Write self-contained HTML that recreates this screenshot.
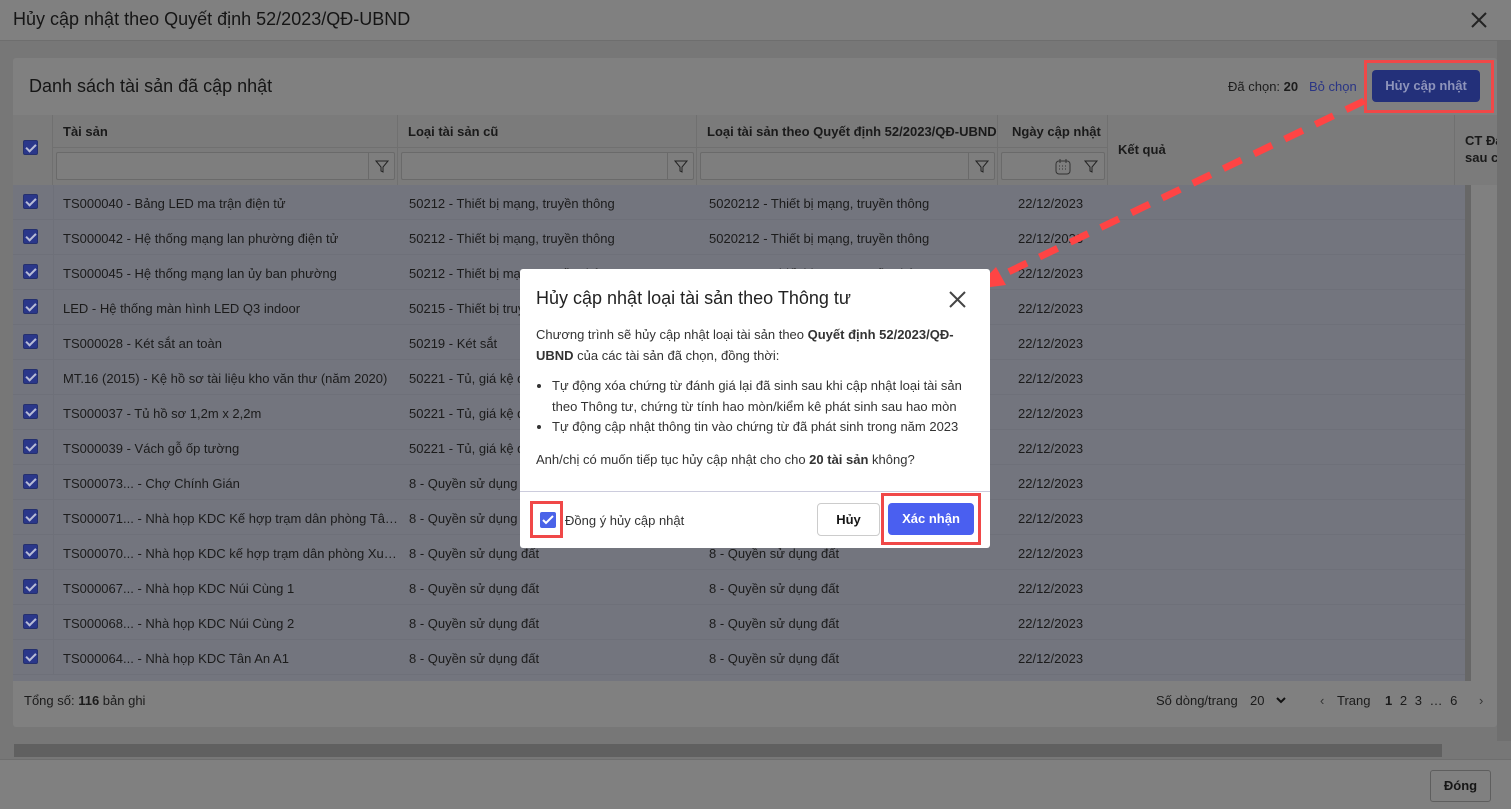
<!DOCTYPE html>
<html><head><meta charset="utf-8"><style>
*{box-sizing:border-box;margin:0;padding:0}
body{width:1511px;height:809px;overflow:hidden;background:#777;font-family:"Liberation Sans",Arial,sans-serif;color:#161616;position:relative;font-size:13px}
.a{position:absolute}
.top{left:0;top:0;width:1511px;height:41px;background:#808080;border-bottom:1px solid #6e6e6e}
.top .t{left:13px;top:9px;font-size:18px;color:#151515}
.card{left:13px;top:58px;width:1484px;height:669px;background:#808080;border-radius:3px}
.cb{width:15px;height:15px;background:#2a378a;border-radius:2px;border:1px solid #25306e}
.cb:after{content:"";position:absolute;left:4px;top:1px;width:4px;height:8px;border:solid #b8bcd6;border-width:0 2px 2px 0;transform:rotate(45deg)}
.hdr{top:115px;left:13px;width:1484px;height:70px;background:#7b7b7b;overflow:hidden}
.col{position:absolute;border-right:1px solid #707070;height:70px;top:0;overflow:hidden}
.ht{position:absolute;left:10px;top:9px;font-weight:bold;font-size:13px;color:#1a1a1a;white-space:nowrap}
.flt{position:absolute;left:3px;top:37px;height:28px;border:1px solid #6a6a6a;background:#7e7e7e;border-radius:2px}
.fi{position:absolute;right:0;top:0;width:26px;height:26px;border-left:1px solid #6a6a6a}
.row{position:absolute;left:13px;width:1452px;height:35px;background:#73757e;border-bottom:1px solid #6e7079}
.row span{position:absolute;top:11px;white-space:nowrap;overflow:hidden;text-overflow:ellipsis;font-size:13px;color:#1b1b1b}
.modal{left:520px;top:269px;width:470px;height:279px;background:#fff;border-radius:3px}
.red{position:absolute;border:3px solid #f04848}
</style></head><body>
<div class="a top"><div class="a t">Hủy cập nhật theo Quyết định 52/2023/QĐ-UBND</div>
<svg class="a" style="left:1470px;top:11px" width="18" height="18"><path d="M2 2L16 16M16 2L2 16" stroke="#222" stroke-width="2"/></svg></div>
<div class="a card"></div>
<div class="a" style="left:29px;top:76px;font-size:18px;color:#151515">Danh sách tài sản đã cập nhật</div>
<div class="a" style="left:1228px;top:79px;color:#1d1d1d">Đã chọn: <b>20</b></div>
<div class="a" style="left:1309px;top:79px;color:#2a3585">Bỏ chọn</div>
<div class="a" style="left:1372px;top:70px;width:108px;height:32px;background:#23307a;border-radius:4px;color:#8e94bb;font-weight:bold;text-align:center;line-height:32px;font-size:13px">Hủy cập nhật</div>
<div class="red" style="left:1364px;top:60px;width:130px;height:53px"></div>
<div class="a hdr">
<div class="col" style="left:0;width:40px"><div class="a cb" style="left:10px;top:25px"></div></div>
<div class="col" style="left:40px;width:345px;"><div class="ht">Tài sản</div><div class="flt" style="width:339px"><div class="fi"><svg width="26" height="26"><path d="M7 8h12l-5 6v5l-2-1v-4z" fill="none" stroke="#222" stroke-width="1"/></svg></div></div><div class="a" style="left:0;top:32px;width:345px;border-top:1px solid #707070"></div></div>
<div class="col" style="left:385px;width:299px"><div class="ht">Loại tài sản cũ</div><div class="flt" style="width:293px"><div class="fi"><svg width="26" height="26"><path d="M7 8h12l-5 6v5l-2-1v-4z" fill="none" stroke="#222"/></svg></div></div><div class="a" style="left:0;top:32px;width:299px;border-top:1px solid #707070"></div></div>
<div class="col" style="left:684px;width:301px"><div class="ht">Loại tài sản theo Quyết định 52/2023/QĐ-UBND</div><div class="flt" style="width:295px"><div class="fi"><svg width="26" height="26"><path d="M7 8h12l-5 6v5l-2-1v-4z" fill="none" stroke="#222"/></svg></div></div><div class="a" style="left:0;top:32px;width:301px;border-top:1px solid #707070"></div></div>
<div class="col" style="left:985px;width:110px"><div class="ht" style="left:14px">Ngày cập nhật</div><div class="flt" style="width:104px"><svg class="a" style="left:52px;top:5px" width="18" height="18"><rect x="2" y="3" width="14" height="13" rx="3" fill="none" stroke="#333"/><path d="M6 1v4M12 1v4" stroke="#333"/><path d="M5 8h1M8 8h1M11 8h1M5 11h1M8 11h1M11 11h1" stroke="#333"/></svg><svg class="a" style="left:76px;top:0" width="26" height="26"><path d="M7 8h12l-5 6v5l-2-1v-4z" fill="none" stroke="#222"/></svg></div><div class="a" style="left:0;top:32px;width:110px;border-top:1px solid #707070"></div></div>
<div class="col" style="left:1095px;width:347px"><div class="ht" style="top:27px">Kết quả</div></div>
<div class="col" style="left:1442px;width:42px;border:none"><div class="ht" style="top:17px;line-height:17px">CT Đánh<br>sau cập</div></div>
</div>
<div class="a" style="left:1465px;top:185px;width:6px;height:496px;background:#676767"></div>
<div class="a" style="left:1497px;top:41px;width:14px;height:719px;background:#6f6f6f"></div>
<div id="rows"></div>
<script>
var R=[["TS000040 - Bảng LED ma trận điện tử","50212 - Thiết bị mạng, truyền thông","5020212 - Thiết bị mạng, truyền thông"],
["TS000042 - Hệ thống mạng lan phường điện tử","50212 - Thiết bị mạng, truyền thông","5020212 - Thiết bị mạng, truyền thông"],
["TS000045 - Hệ thống mạng lan ủy ban phường","50212 - Thiết bị mạng, truyền thông","5020212 - Thiết bị mạng, truyền thông"],
["LED - Hệ thống màn hình LED Q3 indoor","50215 - Thiết bị truyền hình","5020215 - Thiết bị truyền hình"],
["TS000028 - Két sắt an toàn","50219 - Két sắt","5020219 - Két sắt"],
["MT.16 (2015) - Kệ hồ sơ tài liệu kho văn thư (năm 2020)","50221 - Tủ, giá kệ đựng tài liệu","5020221 - Tủ, giá kệ"],
["TS000037 - Tủ hồ sơ 1,2m x 2,2m","50221 - Tủ, giá kệ đựng tài liệu","5020221 - Tủ, giá kệ"],
["TS000039 - Vách gỗ ốp tường","50221 - Tủ, giá kệ đựng tài liệu","5020221 - Tủ, giá kệ"],
["TS000073... - Chợ Chính Gián","8 - Quyền sử dụng đất","8 - Quyền sử dụng đất"],
["TS000071... - Nhà họp KDC Kế hợp trạm dân phòng Tân ...","8 - Quyền sử dụng đất","8 - Quyền sử dụng đất"],
["TS000070... - Nhà họp KDC kế hợp trạm dân phòng Xuân...","8 - Quyền sử dụng đất","8 - Quyền sử dụng đất"],
["TS000067... - Nhà họp KDC Núi Cùng 1","8 - Quyền sử dụng đất","8 - Quyền sử dụng đất"],
["TS000068... - Nhà họp KDC Núi Cùng 2","8 - Quyền sử dụng đất","8 - Quyền sử dụng đất"],
["TS000064... - Nhà họp KDC Tân An A1","8 - Quyền sử dụng đất","8 - Quyền sử dụng đất"]];
var h="";R.forEach(function(r,i){var y=185+i*35;h+='<div class="row" style="top:'+y+'px"><div class="a cb" style="left:10px;top:9px"></div><div class="a" style="left:40px;top:0;height:35px;border-left:1px solid #6e7079"></div><span style="left:50px;width:335px">'+r[0]+'</span><span style="left:396px;width:285px">'+r[1]+'</span><span style="left:696px;width:285px">'+r[2]+'</span><span style="left:1005px">22/12/2023</span></div>'});
document.getElementById("rows").innerHTML=h;
</script>
<div class="a" style="left:13px;top:675px;width:1452px;height:6px;background:#73757e"></div>
<div class="a" style="left:24px;top:693px;color:#1b1b1b">Tổng số: <b>116</b> bản ghi</div>
<div class="a" style="left:1156px;top:693px;color:#1b1b1b">Số dòng/trang</div>
<div class="a" style="left:1250px;top:693px;color:#1b1b1b">20</div>
<svg class="a" style="left:1276px;top:695px" width="10" height="10"><path d="M1 3l4 4 4-4" fill="none" stroke="#111" stroke-width="2"/></svg>
<div class="a" style="left:1320px;top:693px;color:#333">‹</div>
<div class="a" style="left:1337px;top:693px;color:#1b1b1b">Trang</div>
<div class="a" style="left:1385px;top:693px;color:#1b1b1b;word-spacing:4px"><b>1</b> 2 3 … 6</div>
<div class="a" style="left:1479px;top:693px;color:#333">›</div>
<div class="a" style="left:0;top:741px;width:1511px;height:18px;background:#777"></div>
<div class="a" style="left:14px;top:744px;width:1428px;height:13px;background:#606060"></div>
<div class="a" style="left:0;top:759px;width:1511px;height:50px;background:#808080;border-top:1px solid #6e6e6e"></div>
<div class="a" style="left:1430px;top:770px;width:61px;height:32px;border:1px solid #5e5e5e;border-radius:3px;font-weight:bold;text-align:center;line-height:30px">Đóng</div>
<svg class="a" style="left:0;top:0" width="1511" height="809"><line x1="1364" y1="101" x2="1000" y2="276" stroke="#f44" stroke-width="7" stroke-dasharray="20,14"/><path d="M975 289L996 267L1006 285Z" fill="#f44"/></svg>
<div class="a modal">
<div class="a" style="left:16px;top:19px;font-size:18px;color:#222">Hủy cập nhật loại tài sản theo Thông tư</div>
<svg class="a" style="left:429px;top:22px" width="17" height="17"><path d="M1 1L16 16M16 1L1 16" stroke="#444" stroke-width="2"/></svg>
<div class="a" style="left:16px;top:55px;width:440px;font-size:13px;line-height:21px;color:#333">Chương trình sẽ hủy cập nhật loại tài sản theo <b>Quyết định 52/2023/QĐ-UBND</b> của các tài sản đã chọn, đồng thời:</div>
<ul class="a" style="left:32px;top:107px;width:420px;font-size:13px;line-height:20.5px;color:#333;list-style:disc;padding-left:0">
<li>Tự động xóa chứng từ đánh giá lại đã sinh sau khi cập nhật loại tài sản theo Thông tư, chứng từ tính hao mòn/kiểm kê phát sinh sau hao mòn</li>
<li>Tự động cập nhật thông tin vào chứng từ đã phát sinh trong năm 2023</li></ul>
<div class="a" style="left:16px;top:183px;font-size:13px;color:#333">Anh/chị có muốn tiếp tục hủy cập nhật cho cho <b>20 tài sản</b> không?</div>
<div class="a" style="left:0;top:222px;width:470px;border-top:1px solid #ccd"></div>
<div class="a" style="left:20px;top:243px;width:16px;height:16px;background:#4a63e8;border-radius:2px"><svg width="16" height="16"><path d="M3 8l3 3 7-7" fill="none" stroke="#fff" stroke-width="2"/></svg></div>
<div class="red" style="left:10px;top:232px;width:33px;height:37px"></div>
<div class="a" style="left:45px;top:244px;font-size:13px;color:#333">Đồng ý hủy cập nhật</div>
<div class="a" style="left:297px;top:234px;width:63px;height:33px;border:1px solid #ccc;border-radius:4px;text-align:center;line-height:31px;font-weight:bold;font-size:13px">Hủy</div>
<div class="a" style="left:368px;top:234px;width:86px;height:32px;background:#4a5ff0;border-radius:4px;text-align:center;line-height:32px;font-weight:bold;color:#fff;font-size:13px">Xác nhận</div>
<div class="red" style="left:361px;top:224px;width:100px;height:52px"></div>
</div>
</body></html>
